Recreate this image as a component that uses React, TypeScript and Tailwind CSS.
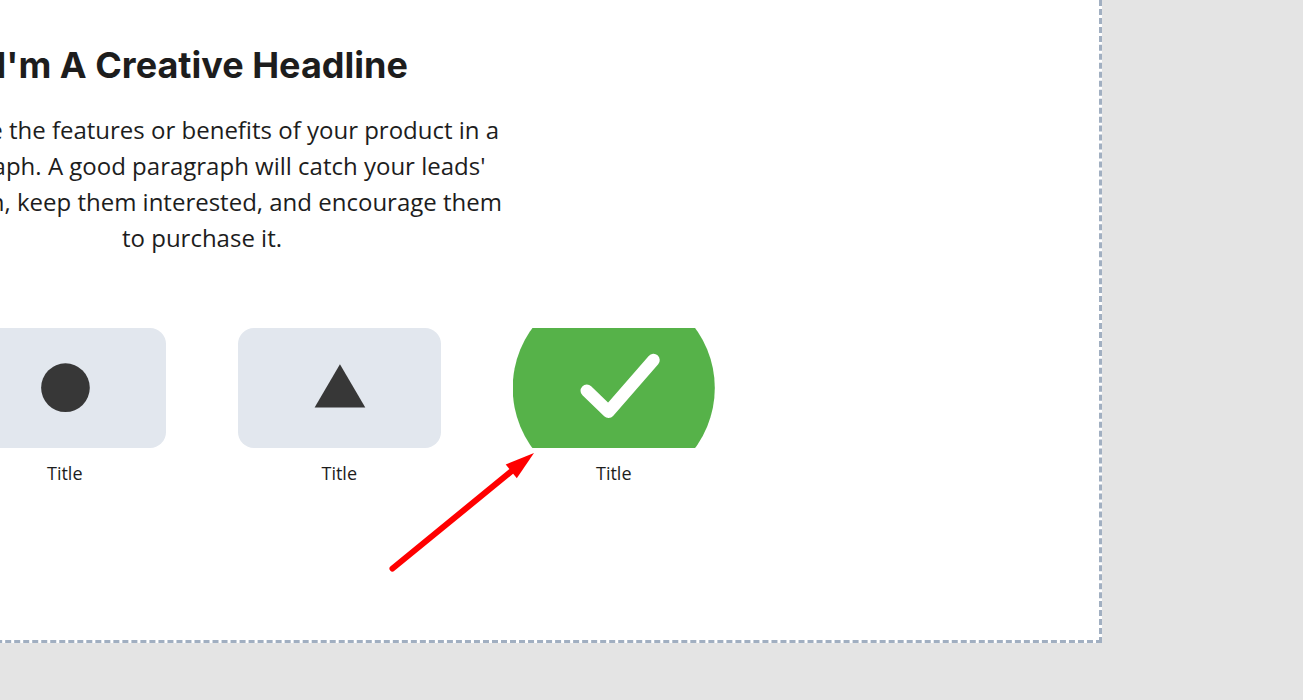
import type { ReactNode } from "react";

type Feature = {
  id: string;
  title: string;
  shape: ReactNode;
  placeholder: boolean;
};

const features: Feature[] = [
  {
    id: "square",
    title: "Title",
    placeholder: true,
    shape: <rect x="78" y="36" width="48" height="48" fill="#373737" />,
  },
  {
    id: "circle",
    title: "Title",
    placeholder: true,
    shape: <circle cx="101.7" cy="59.7" r="24.4" fill="#373737" />,
  },
  {
    id: "triangle",
    title: "Title",
    placeholder: true,
    shape: <path d="M102.2 36.3 127.6 79.6H76.8z" fill="#373737" />,
  },
  {
    id: "check",
    title: "Title",
    placeholder: false,
    shape: (
      <>
        <circle cx="101" cy="60" r="101.3" fill="#56b249" />
        <path
          d="M74 62.8 95.8 83.8 140.8 32"
          fill="none"
          stroke="#fff"
          strokeWidth="12.6"
          strokeLinecap="round"
          strokeLinejoin="round"
        />
      </>
    ),
  },
];

function FeatureCard({ feature }: { feature: Feature }) {
  return (
    <figure className="flex flex-col items-center">
      <div
        className={
          feature.placeholder
            ? "h-[120px] w-full rounded-2xl bg-[#e2e7ee]"
            : "h-[120px] w-full"
        }
      >
        <svg viewBox="0 0 203 120" className="h-full w-full" aria-hidden="true">
          {feature.shape}
        </svg>
      </div>
      <figcaption className="mt-3 text-lg leading-[26px]">{feature.title}</figcaption>
    </figure>
  );
}

function PointerArrow() {
  return (
    <svg
      viewBox="0 0 150 124"
      className="absolute top-[122px] right-[177px] h-[124px] w-[150px]"
      aria-hidden="true"
    >
      <path d="M4.5 118.5 125 20" stroke="#f00" strokeWidth="6" strokeLinecap="round" />
      <path d="M146 3 117.7 14.5 128.8 28.3z" fill="#f00" />
    </svg>
  );
}

export default function App() {
  return (
    <main className="flex min-h-screen items-start justify-end overflow-hidden bg-[#e4e4e4] pr-[201px] font-['Open_Sans',sans-serif] text-[#1d1d1d]">
      <section className="flex w-[1800px] shrink-0 flex-col items-center border-3 border-t-0 border-dashed border-[#a1afc1] bg-white pt-11 pb-[154px]">
        <h1 className="font-['Inter',sans-serif] text-4xl leading-[42px] font-bold">
          I&apos;m A Creative Headline
        </h1>
        <p className="mt-[26px] w-[620px] text-center text-2xl leading-9">
          Describe the features or benefits of your product in a paragraph. A good paragraph will
          catch your leads&apos; attention, keep them interested, and encourage them to purchase it.
        </p>
        <div className="relative mt-[72px] grid w-[1026px] grid-cols-4 gap-[72px]">
          {features.map((feature) => (
            <FeatureCard key={feature.id} feature={feature} />
          ))}
          <PointerArrow />
        </div>
      </section>
    </main>
  );
}
